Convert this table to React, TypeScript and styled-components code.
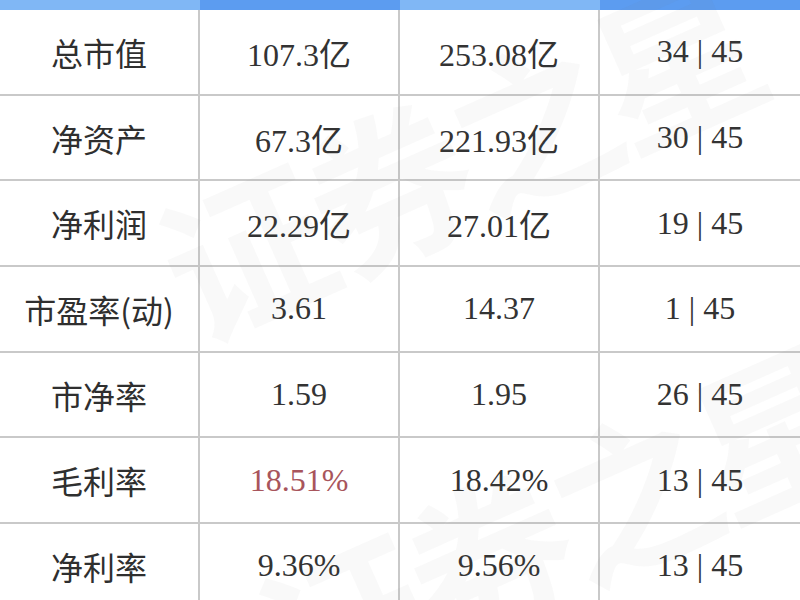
import { FC } from 'react'
import styled, { createGlobalStyle } from 'styled-components'

interface Row {
  label: string
  company: string
  industry: string
  rank: string
  highlight?: boolean
}

const rows: Row[] = [
  { label: '总市值', company: '107.3亿', industry: '253.08亿', rank: '34 | 45' },
  { label: '净资产', company: '67.3亿', industry: '221.93亿', rank: '30 | 45' },
  { label: '净利润', company: '22.29亿', industry: '27.01亿', rank: '19 | 45' },
  { label: '市盈率(动)', company: '3.61', industry: '14.37', rank: '1 | 45' },
  { label: '市净率', company: '1.59', industry: '1.95', rank: '26 | 45' },
  { label: '毛利率', company: '18.51%', industry: '18.42%', rank: '13 | 45', highlight: true },
  { label: '净利率', company: '9.36%', industry: '9.56%', rank: '13 | 45' }
]

const GlobalStyle = createGlobalStyle`
  html, body {
    margin: 0;
    padding: 0;
    background: #fff;
    overflow: hidden;
  }
`

const App: FC = () => {
  return (
    <>
      <GlobalStyle />
      <Page>
        <Table>
          <HeadCell $tone="light" />
          <HeadCell $tone="dark" />
          <HeadCell $tone="light" />
          <HeadCell $tone="dark" />
          {rows.map((row) => (
            <TableRow key={row.label}>
              <LabelCell>{row.label}</LabelCell>
              <ValueCell $highlight={row.highlight}>{row.company}</ValueCell>
              <ValueCell>{row.industry}</ValueCell>
              <ValueCell $last>{row.rank}</ValueCell>
            </TableRow>
          ))}
        </Table>
        <Watermark aria-hidden>
          <WatermarkLine $top={170} $left={120}>证券之星</WatermarkLine>
          <WatermarkLine $top={540} $left={220}>证券之星</WatermarkLine>
        </Watermark>
      </Page>
    </>
  )
}

const Page = styled.div`
  position: relative;
  width: 800px;
  height: 600px;
  overflow: hidden;
  background: #fff;
`

const Table = styled.div`
  display: grid;
  grid-template-columns: repeat(4, 200px);
  grid-template-rows: 10px;
  grid-auto-rows: 85.7px;
`

const HeadCell = styled.div<{ $tone: 'light' | 'dark' }>`
  background: ${(p) => (p.$tone === 'light' ? '#80b7f5' : '#5c9cf0')};
`

const TableRow = styled.div`
  display: contents;
`

const Cell = styled.div`
  display: flex;
  align-items: center;
  justify-content: center;
  box-sizing: border-box;
  border-bottom: 2px solid #c9c9c9;
  border-right: 2px solid #c9c9c9;
  color: #333;
  font-size: 32px;
  white-space: nowrap;
  position: relative;
  z-index: 1;
`

const LabelCell = styled(Cell)`
  font-family: 'Noto Sans CJK SC', 'Noto Sans', sans-serif;
  color: #2f2f2f;
`

const ValueCell = styled(Cell)<{ $highlight?: boolean; $last?: boolean }>`
  font-family: 'Liberation Serif', 'Noto Sans CJK SC', serif;
  color: ${(p) => (p.$highlight ? '#a8555c' : '#333')};
  border-right-width: ${(p) => (p.$last ? 0 : 2)}px;
`

const Watermark = styled.div`
  position: absolute;
  inset: 0;
  pointer-events: none;
  z-index: 2;
`

const WatermarkLine = styled.div<{ $top: number; $left: number }>`
  position: absolute;
  top: ${(p) => p.$top}px;
  left: ${(p) => p.$left}px;
  font-family: 'Noto Sans CJK SC', sans-serif;
  font-size: 165px;
  font-weight: 700;
  letter-spacing: -8px;
  white-space: nowrap;
  color: rgba(120, 120, 120, 0.045);
  transform: rotate(-24deg);
  transform-origin: left top;
`

export default App
